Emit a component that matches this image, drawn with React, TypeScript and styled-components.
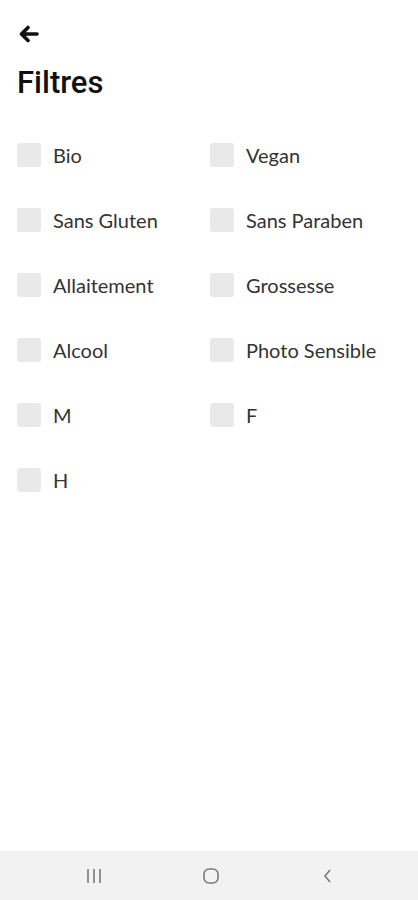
import { FC } from 'react';
import styled, { createGlobalStyle } from 'styled-components';

const GlobalStyle = createGlobalStyle`
  body {
    margin: 0;
    background: #ffffff;
    font-family: Lato, 'Open Sans', sans-serif;
  }
`;

const Screen = styled.div`
  min-height: 100vh;
  display: flex;
  flex-direction: column;
`;

const Content = styled.div`
  flex: 1;
  padding: 22px 17px 0 17px;
`;

const BackButton = styled.button`
  border: 0;
  background: none;
  padding: 0;
  width: 24px;
  height: 24px;
  display: flex;
  align-items: center;
  justify-content: center;
  cursor: pointer;
`;

const Title = styled.h1`
  margin: 19px 0 0 0;
  font-family: Roboto, 'Liberation Sans', sans-serif;
  font-weight: 500;
  font-size: 31px;
  line-height: 36px;
  color: #111;
`;

const FilterGrid = styled.div`
  margin-top: 34px;
  display: grid;
  grid-template-columns: 193px 1fr;
  grid-auto-rows: 65px;
`;

const Option = styled.label`
  display: flex;
  align-items: center;
  gap: 12px;
  height: 40px;
  cursor: pointer;
`;

const Box = styled.span<{ $checked?: boolean }>`
  width: 24px;
  height: 24px;
  border-radius: 3px;
  background: ${(p) => (p.$checked ? '#4caf50' : '#e9e9e9')};
  flex-shrink: 0;
`;

const Label = styled.span`
  font-size: 20px;
  color: #333;
`;

const NavBar = styled.div`
  height: 49px;
  background: #f2f2f2;
  display: grid;
  grid-template-columns: repeat(3, 117px);
  justify-content: center;
  align-items: center;
  justify-items: center;
  padding-left: 4px;
`;

const filters = [
  'Bio',
  'Vegan',
  'Sans Gluten',
  'Sans Paraben',
  'Allaitement',
  'Grossesse',
  'Alcool',
  'Photo Sensible',
  'M',
  'F',
  'H',
];

const BackArrow: FC = () => (
  <svg width="22" height="18" viewBox="0 0 22 18">
    <path
      d="M19 9H4M10 2.5L3.5 9l6.5 6.5"
      fill="none"
      stroke="#111"
      strokeWidth="3.6"
      strokeLinecap="round"
      strokeLinejoin="round"
    />
  </svg>
);

const App: FC = () => (
  <Screen>
    <GlobalStyle />
    <Content>
      <BackButton aria-label="Retour">
        <BackArrow />
      </BackButton>
      <Title>Filtres</Title>
      <FilterGrid>
        {filters.map((f) => (
          <Option key={f}>
            <Box />
            <Label>{f}</Label>
          </Option>
        ))}
      </FilterGrid>
    </Content>
    <NavBar>
      <svg width="18" height="16" viewBox="0 0 18 16">
        <path d="M3 1v14M9 1v14M15 1v14" stroke="#7a7a7a" strokeWidth="1.6" />
      </svg>
      <svg width="18" height="18" viewBox="0 0 18 18">
        <rect x="2" y="2" width="14" height="14" rx="5" fill="none" stroke="#7a7a7a" strokeWidth="1.6" />
      </svg>
      <svg width="14" height="18" viewBox="0 0 14 18">
        <path d="M9 3L4 9l5 6" fill="none" stroke="#7a7a7a" strokeWidth="1.6" />
      </svg>
    </NavBar>
  </Screen>
);

export default App;
